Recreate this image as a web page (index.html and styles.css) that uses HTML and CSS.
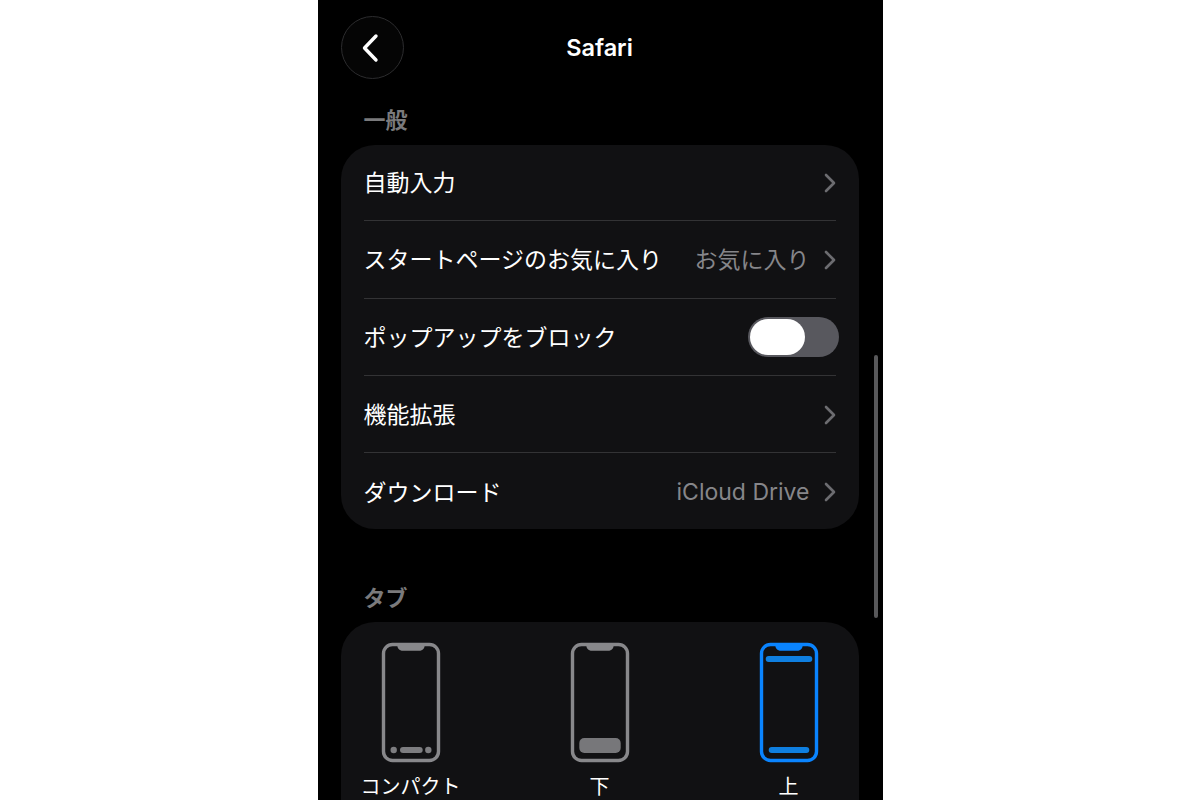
FILE: index.html
```html
<!DOCTYPE html>
<html lang="ja">
<head>
<meta charset="utf-8">
<title>Safari</title>
<link rel="stylesheet" href="styles.css">
</head>
<body>
<main class="phone">
  <header class="nav">
    <button class="back" aria-label="戻る">
      <svg width="24" height="32" viewBox="0 0 24 32"><path d="M18 4 L6.500 16 L18 28" fill="none" stroke="#fff" stroke-width="3.400" stroke-linecap="round" stroke-linejoin="round"/></svg>
    </button>
    <h1 class="title">Safari</h1>
    <span></span>
  </header>

  <h2 class="section first">一般</h2>
  <section class="card list">
    <div class="row"><span class="label">自動入力</span><svg class="chev" width="12" height="20" viewBox="0 0 12 20"><path d="M2 2 L10 10 L2 18" fill="none" stroke="#6c6c70" stroke-width="2.600" stroke-linecap="round" stroke-linejoin="round"/></svg></div>
    <div class="row"><span class="label">スタートページのお気に入り</span><span class="value cjk">お気に入り</span><svg class="chev" width="12" height="20" viewBox="0 0 12 20"><path d="M2 2 L10 10 L2 18" fill="none" stroke="#6c6c70" stroke-width="2.600" stroke-linecap="round" stroke-linejoin="round"/></svg></div>
    <div class="row"><span class="label">ポップアップをブロック</span><span class="toggle"><span class="thumb"></span></span></div>
    <div class="row"><span class="label">機能拡張</span><svg class="chev" width="12" height="20" viewBox="0 0 12 20"><path d="M2 2 L10 10 L2 18" fill="none" stroke="#6c6c70" stroke-width="2.600" stroke-linecap="round" stroke-linejoin="round"/></svg></div>
    <div class="row"><span class="label">ダウンロード</span><span class="value">iCloud Drive</span><svg class="chev" width="12" height="20" viewBox="0 0 12 20"><path d="M2 2 L10 10 L2 18" fill="none" stroke="#6c6c70" stroke-width="2.600" stroke-linecap="round" stroke-linejoin="round"/></svg></div>
  </section>

  <h2 class="section second">タブ</h2>
  <section class="card tabs">
    <div class="tab">
      <svg width="60" height="121" viewBox="0 0 60 121">
        <rect x="2.500" y="2.500" width="55" height="116" rx="9" fill="none" stroke="#88888b" stroke-width="3.400"/>
        <path d="M16 2 H44 C43.500 6.500 42 8.800 38 8.800 H22 C18 8.800 16.500 6.500 16 2 Z" fill="#88888b"/>
        <circle cx="12.700" cy="108" r="3.200" fill="#7d7d80"/>
        <rect x="19" y="105" width="22.700" height="6" rx="3" fill="#7d7d80"/>
        <circle cx="47.300" cy="108" r="3.200" fill="#7d7d80"/>
      </svg>
      <span class="tab-label">コンパクト</span>
    </div>
    <div class="tab">
      <svg width="60" height="121" viewBox="0 0 60 121">
        <rect x="2.500" y="2.500" width="55" height="116" rx="9" fill="none" stroke="#88888b" stroke-width="3.400"/>
        <path d="M16 2 H44 C43.500 6.500 42 8.800 38 8.800 H22 C18 8.800 16.500 6.500 16 2 Z" fill="#88888b"/>
        <rect x="9.300" y="96" width="41.400" height="15" rx="5" fill="#77777a"/>
      </svg>
      <span class="tab-label">下</span>
    </div>
    <div class="tab">
      <svg width="60" height="121" viewBox="0 0 60 121">
        <rect x="2.500" y="2.500" width="55" height="116" rx="9" fill="none" stroke="#0a84ff" stroke-width="3.400"/>
        <path d="M16 2 H44 C43.500 6.500 42 8.800 38 8.800 H22 C18 8.800 16.500 6.500 16 2 Z" fill="#0a84ff"/>
        <rect x="6.700" y="14" width="46.600" height="6" rx="3" fill="#0f7fe0"/>
        <rect x="9.700" y="105" width="40.600" height="6" rx="3" fill="#0f7fe0"/>
      </svg>
      <span class="tab-label">上</span>
    </div>
  </section>
  <div class="scrollbar"></div>
</main>
</body>
</html>
```

FILE: styles.css
```css
* { box-sizing: border-box; }
html, body { margin: 0; height: 100%; background: #fff; overflow: hidden; }
body {
  font-family: "Inter", "Noto Sans CJK JP", sans-serif;
  color: #fff;
}
.phone {
  position: relative;
  width: 565px;
  height: 800px;
  margin: 0 auto;
  padding: 16px 24px 0 23px;
  background: #000;
  overflow: hidden;
}
.nav {
  display: grid;
  grid-template-columns: 63px 1fr 63px;
  align-items: center;
  height: 63px;
}
.back {
  display: flex;
  align-items: center;
  justify-content: center;
  width: 63px;
  height: 63px;
  padding: 0 4px 0 0;
  border: 1px solid #2c2c2e;
  border-radius: 50%;
  background: #050505;
}
.title {
  margin: 1px 0 0;
  font-size: 23.500px;
  font-weight: 600;
  line-height: 32px;
  text-align: center;
}
.section {
  margin: 0;
  padding-left: 23px;
  color: #7a7a7c;
  font-size: 22px;
  font-weight: 600;
  line-height: 32px;
}
.section.first { margin-top: 25px; height: 41px; }
.section.second { margin-top: 53px; height: 40px; }
.card {
  background: #111113;
  border-radius: 34px;
}
.list { height: 384px; padding: 0 23px; }
.row {
  display: flex;
  align-items: center;
  height: 76.300px;
  margin-bottom: 1px;
  border-bottom: 1px solid #333335;
}
.row:last-child { border-bottom: 0; margin-bottom: 0; }
.label {
  flex: 1;
  padding-bottom: 3px;
  font-size: 23px;
  font-weight: 400;
}
.value {
  margin-right: 14px;
  color: #86868a;
  font-size: 23px;
}
.value.cjk { padding-bottom: 3px; }
.chev { flex: none; }
.toggle {
  display: flex;
  align-items: center;
  width: 91px;
  height: 40px;
  margin-right: -3px;
  padding: 2px;
  border-radius: 20px;
  background: #58585e;
}
.thumb {
  width: 55px;
  height: 36px;
  border-radius: 18px;
  background: #fff;
}
.tabs {
  display: grid;
  grid-template-columns: repeat(3, 189px);
  justify-content: center;
  height: 240px;
  padding-top: 20px;
}
.tab {
  display: flex;
  flex-direction: column;
  align-items: center;
}
.tab-label {
  margin-top: 9px;
  font-size: 20px;
  line-height: 30px;
  white-space: nowrap;
}
.scrollbar {
  position: absolute;
  top: 355px;
  left: 556px;
  width: 4px;
  height: 263px;
  border-radius: 2px;
  background: #58585a;
}
```
